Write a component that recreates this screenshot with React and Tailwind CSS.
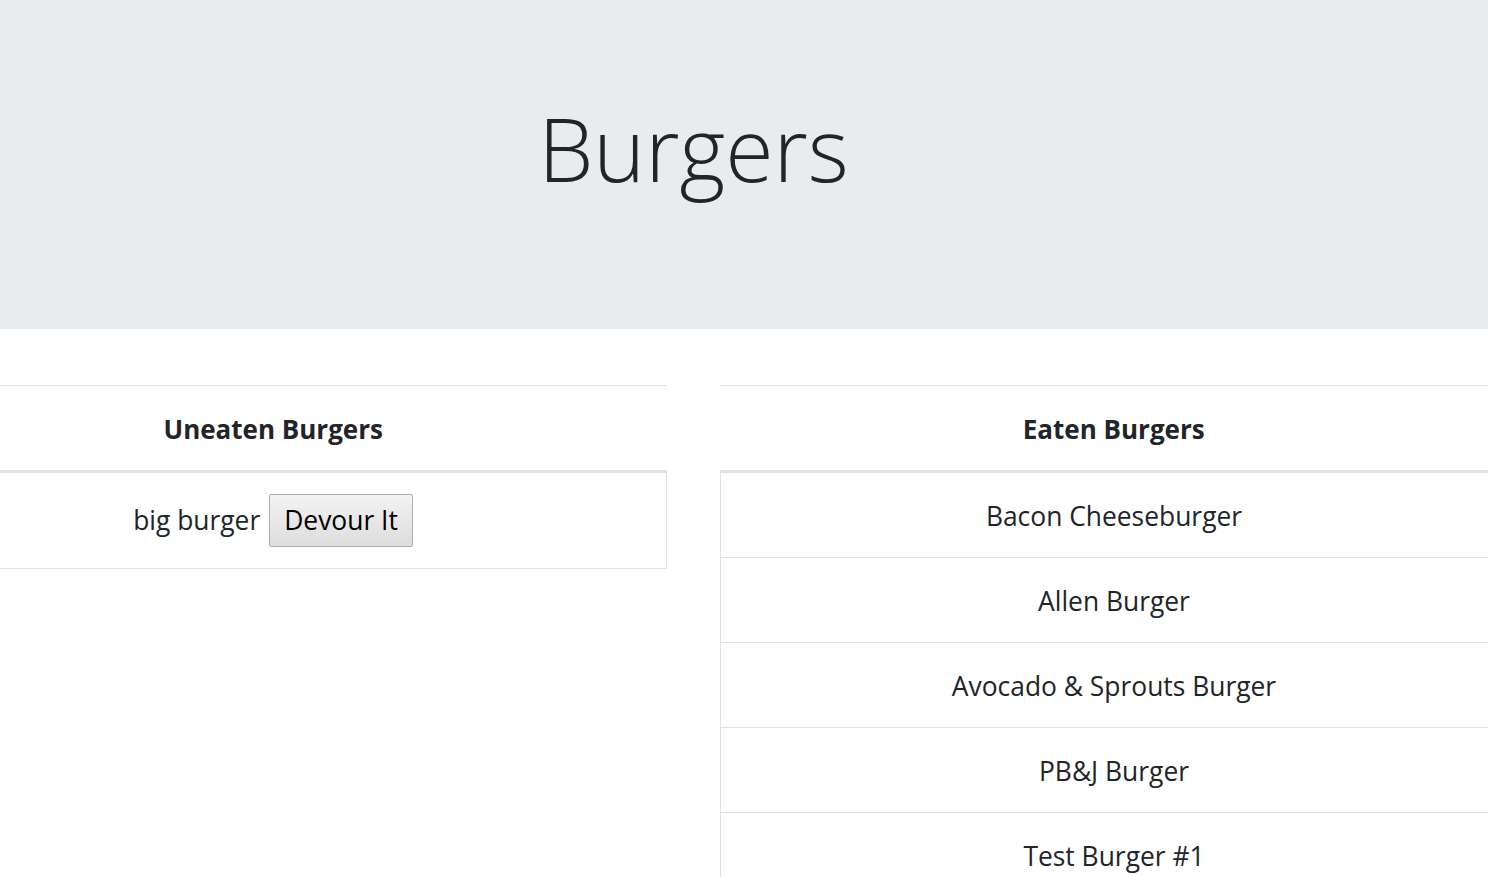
import React from 'react';

const uneaten = [{ id: 7, name: 'big burger' }];
const eaten = [
  { id: 1, name: 'Bacon Cheeseburger' },
  { id: 2, name: 'Allen Burger' },
  { id: 3, name: 'Avocado & Sprouts Burger' },
  { id: 4, name: 'PB&J Burger' },
  { id: 5, name: 'Test Burger #1' },
];

function BurgerTable({ title, children }) {
  return (
    <table className="w-[787px] border-collapse text-center text-[#212529]">
      <thead>
        <tr>
          <th className="border-t border-b-[3px] border-[#dee2e6] pt-[22px] pb-[20px] text-[26px] font-bold leading-[42px]">
            {title}
          </th>
        </tr>
      </thead>
      <tbody>{children}</tbody>
    </table>
  );
}

function App() {
  return (
    <div className="w-[1488px] h-[877px] overflow-hidden bg-white font-['Open_Sans','Noto_Sans',sans-serif] text-[#212529]">
      <div className="-ml-[120px] w-[1627px]">
        <div className="h-[329px] bg-[#e9ecef] pt-[96px] text-center">
          <h1 className="text-[88px] font-light leading-[1.2]">Burgers</h1>
        </div>

        <div className="mt-[56px] flex items-start gap-[53px]">
          <BurgerTable title="Uneaten Burgers">
            {uneaten.map((b) => (
              <tr key={b.id}>
                <td className="border-r border-b border-[#dee2e6] py-[21px]">
                  <div className="flex items-center justify-center gap-[9px] text-[26.4px]">
                    <span>{b.name}</span>
                    <button className="h-[53px] rounded-[2px] border border-[#adadad] bg-gradient-to-b from-[#f3f3f3] to-[#dddddd] px-[14px] text-[26.4px] leading-[49px] text-black">
                      Devour It
                    </button>
                  </div>
                </td>
              </tr>
            ))}
          </BurgerTable>

          <BurgerTable title="Eaten Burgers">
            {eaten.map((b) => (
              <tr key={b.id}>
                <td className="border-l border-b border-[#dee2e6] pt-[22px] pb-[20px] text-[26.4px] leading-[42px]">
                  {b.name}
                </td>
              </tr>
            ))}
          </BurgerTable>
        </div>
      </div>
    </div>
  );
}

export default App;
